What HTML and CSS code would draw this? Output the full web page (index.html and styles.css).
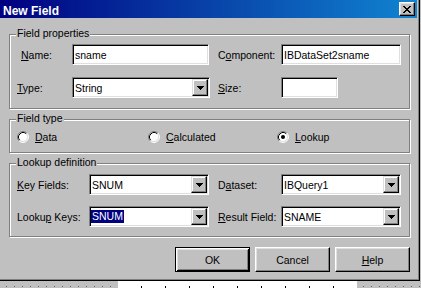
FILE: index.html
```html
<!DOCTYPE html>
<html lang="en">
  <head>
    <meta charset="UTF-8" />
    <title>New Field</title>
    <link rel="stylesheet" href="styles.css">
  </head>
  <body>
    <div class="dialog">
      <div class="titlebar">
        <span class="title">New Field</span>
        <span class="close">
          <svg width="8" height="7" viewBox="0 0 8 7" shape-rendering="crispEdges">
            <path d="M0 0h2v1h-2zM6 0h2v1h-2zM1 1h2v1h-2zM5 1h2v1h-2zM2 2h4v1h-4zM3 3h2v1h-2zM2 4h4v1h-4zM1 5h2v1h-2zM5 5h2v1h-2zM0 6h2v1h-2zM6 6h2v1h-2z" />
          </svg>
        </span>
      </div>

      <div class="client">
        <div class="group props">
          <span class="legend">Field properties</span>
          <div class="row">
            <span class="lbl lbl-name"><u>N</u>ame:</span>
            <div class="edit w-name"><span class="text">sname</span></div>
            <span class="lbl lbl-right">C<u>o</u>mponent:</span>
            <div class="edit w-wide"><span class="text">IBDataSet2sname</span></div>
          </div>
          <div class="row">
            <span class="lbl"><u>T</u>ype:</span>
            <div class="edit w-type">
              <span class="text">String</span>
              <span class="drop"><svg width="7" height="4" viewBox="0 0 7 4" shape-rendering="crispEdges"><path d="M0 0h7v1h-7zM1 1h5v1h-5zM2 2h3v1h-3zM3 3h1v1h-1z" /></svg></span>
            </div>
            <span class="lbl lbl-right lbl-size"><u>S</u>ize:</span>
            <div class="edit w-size"></div>
          </div>
        </div>

        <div class="group types">
          <span class="legend">Field type</span>
          <div class="radios">
            <div class="radio-item r-data">
              <svg class="radio" width="12" height="12" viewBox="0 0 12 12">
                <circle cx="6" cy="6" r="5" fill="#fff" />
                <path d="M2.11 9.89A5.5 5.5 0 0 1 9.89 2.11" stroke="#808080" fill="none" />
                <path d="M9.89 2.11A5.5 5.5 0 0 1 2.11 9.89" stroke="#fff" fill="none" />
                <path d="M2.82 9.18A4.5 4.5 0 0 1 9.18 2.82" stroke="#000" fill="none" />
                <path d="M9.18 2.82A4.5 4.5 0 0 1 2.82 9.18" stroke="#dfdfdf" fill="none" />
              </svg>
              <span><u>D</u>ata</span>
            </div>
            <div class="radio-item r-calc">
              <svg class="radio" width="12" height="12" viewBox="0 0 12 12">
                <circle cx="6" cy="6" r="5" fill="#fff" />
                <path d="M2.11 9.89A5.5 5.5 0 0 1 9.89 2.11" stroke="#808080" fill="none" />
                <path d="M9.89 2.11A5.5 5.5 0 0 1 2.11 9.89" stroke="#fff" fill="none" />
                <path d="M2.82 9.18A4.5 4.5 0 0 1 9.18 2.82" stroke="#000" fill="none" />
                <path d="M9.18 2.82A4.5 4.5 0 0 1 2.82 9.18" stroke="#dfdfdf" fill="none" />
              </svg>
              <span><u>C</u>alculated</span>
            </div>
            <div class="radio-item">
              <svg class="radio" width="12" height="12" viewBox="0 0 12 12">
                <circle cx="6" cy="6" r="5" fill="#fff" />
                <path d="M2.11 9.89A5.5 5.5 0 0 1 9.89 2.11" stroke="#808080" fill="none" />
                <path d="M9.89 2.11A5.5 5.5 0 0 1 2.11 9.89" stroke="#fff" fill="none" />
                <path d="M2.82 9.18A4.5 4.5 0 0 1 9.18 2.82" stroke="#000" fill="none" />
                <path d="M9.18 2.82A4.5 4.5 0 0 1 2.82 9.18" stroke="#dfdfdf" fill="none" />
                <circle cx="6" cy="6" r="2" fill="#000" />
              </svg>
              <span><u>L</u>ookup</span>
            </div>
          </div>
        </div>

        <div class="group lookup">
          <span class="legend">Lookup definition</span>
          <div class="row">
            <span class="lbl lbl-long"><u>K</u>ey Fields:</span>
            <div class="edit w-mid">
              <span class="text">SNUM</span>
              <span class="drop"><svg width="7" height="4" viewBox="0 0 7 4" shape-rendering="crispEdges"><path d="M0 0h7v1h-7zM1 1h5v1h-5zM2 2h3v1h-3zM3 3h1v1h-1z" /></svg></span>
            </div>
            <span class="lbl lbl-right">D<u>a</u>taset:</span>
            <div class="edit w-wide">
              <span class="text">IBQuery1</span>
              <span class="drop"><svg width="7" height="4" viewBox="0 0 7 4" shape-rendering="crispEdges"><path d="M0 0h7v1h-7zM1 1h5v1h-5zM2 2h3v1h-3zM3 3h1v1h-1z" /></svg></span>
            </div>
          </div>
          <div class="row">
            <span class="lbl lbl-long">Looku<u>p</u> Keys:</span>
            <div class="edit w-mid">
              <span class="text"><span class="sel">SNUM</span></span>
              <span class="drop"><svg width="7" height="4" viewBox="0 0 7 4" shape-rendering="crispEdges"><path d="M0 0h7v1h-7zM1 1h5v1h-5zM2 2h3v1h-3zM3 3h1v1h-1z" /></svg></span>
            </div>
            <span class="lbl lbl-right"><u>R</u>esult Field:</span>
            <div class="edit w-wide">
              <span class="text">SNAME</span>
              <span class="drop"><svg width="7" height="4" viewBox="0 0 7 4" shape-rendering="crispEdges"><path d="M0 0h7v1h-7zM1 1h5v1h-5zM2 2h3v1h-3zM3 3h1v1h-1z" /></svg></span>
            </div>
          </div>
        </div>

        <div class="buttons">
          <button class="btn default">OK</button>
          <button class="btn">Cancel</button>
          <button class="btn"><u>H</u>elp</button>
        </div>
      </div>
    </div>

    <div class="designer">
      <div class="dots dots-left"></div>
      <div class="sheet"></div>
      <div class="dots"></div>
    </div>
  </body>
</html>
```

FILE: styles.css
```css
body {
  margin: 0;
  width: 421px;
  height: 288px;
  overflow: hidden;
  background: #c0c0c0;
  font-family: "Liberation Sans", Arial, sans-serif;
  font-size: 10.5px;
  color: #000;
}
u {
  text-decoration: underline;
  text-underline-offset: 1px;
}
.dialog {
  width: 420px;
  height: 281px;
  box-sizing: border-box;
  border-right: 1px solid #000;
  border-bottom: 1px solid #000;
  box-shadow: inset -1px -1px #808080;
  padding: 0 2px 2px 0;
  background: #c0c0c0;
}
.titlebar {
  height: 18px;
  box-sizing: border-box;
  display: flex;
  justify-content: space-between;
  background: linear-gradient(90deg, #000080, #1084d0);
  padding: 0 2px 0 3px;
}
.title {
  color: #fff;
  font-weight: bold;
  font-size: 12px;
  line-height: 14px;
  padding-top: 4px;
}
.close {
  margin-top: 2px;
  width: 16px;
  height: 14px;
  box-sizing: border-box;
  display: flex;
  align-items: center;
  justify-content: center;
  padding-right: 1px;
  background: #c0c0c0;
  border: 1px solid;
  border-color: #fff #000 #000 #fff;
  box-shadow: inset -1px -1px #808080, inset 1px 1px #dfdfdf;
}
.client {
  display: flex;
  flex-direction: column;
  padding: 16px 0 0 9px;
}
.group {
  position: relative;
  box-sizing: border-box;
  width: 401px;
  border: 1px solid #808080;
  box-shadow: inset 1px 1px #fff, 1px 1px #fff;
}
.legend {
  position: absolute;
  left: 6px;
  top: -8px;
  padding: 0 1px;
  line-height: 13px;
  background: #c0c0c0;
}
.props {
  height: 75px;
  padding: 9px 0 0 7px;
}
.types {
  height: 34px;
  margin-top: 10px;
  padding: 10px 0 0 7px;
}
.lookup {
  height: 74px;
  margin-top: 10px;
  padding: 10px 0 0 7px;
}
.row {
  display: flex;
  align-items: center;
  height: 21px;
}
.props .row + .row {
  margin-top: 12px;
}
.lookup .row + .row {
  margin-top: 11px;
}
.lbl {
  width: 55px;
  flex: none;
  white-space: nowrap;
}
.lbl-name {
  width: 51px;
  padding-left: 4px;
}
.lbl-long {
  width: 72px;
}
.lbl-right {
  width: 63px;
  margin-left: 9px;
}
.lbl-size {
  margin-left: 8px;
}
.edit {
  box-sizing: border-box;
  height: 21px;
  flex: none;
  display: flex;
  align-items: center;
  padding: 1px;
  background: #fff;
  border: 1px solid;
  border-color: #808080 #fff #fff #808080;
  box-shadow: inset 1px 1px #000, inset -1px -1px #dfdfdf;
}
.w-name {
  width: 137px;
}
.w-type {
  width: 138px;
}
.w-wide {
  width: 120px;
}
.w-mid {
  width: 120px;
}
.w-size {
  width: 57px;
}
.text {
  flex: 1;
  padding-left: 1px;
  white-space: nowrap;
  overflow: hidden;
}
.sel {
  background: #000080;
  color: #fff;
  line-height: 13px;
  display: inline-block;
  margin-left: -1px;
  padding: 0 1px;
}
.drop {
  width: 16px;
  height: 17px;
  box-sizing: border-box;
  display: flex;
  align-items: center;
  justify-content: center;
  background: #c0c0c0;
  border: 1px solid;
  border-color: #dfdfdf #000 #000 #dfdfdf;
  box-shadow: inset -1px -1px #808080, inset 1px 1px #fff;
}
.radios {
  display: flex;
  align-items: center;
  height: 14px;
}
.radio-item {
  display: flex;
  align-items: center;
  gap: 6px;
}
.r-data {
  width: 131px;
}
.r-calc {
  width: 129px;
}
.buttons {
  display: flex;
  justify-content: flex-end;
  gap: 5px;
  margin-top: 10px;
  padding-right: 7px;
}
.btn {
  width: 75px;
  height: 25px;
  box-sizing: border-box;
  padding: 0;
  font: inherit;
  color: #000;
  background: #c0c0c0;
  border: 1px solid;
  border-color: #fff #000 #000 #fff;
  box-shadow: inset -1px -1px #808080, inset 1px 1px #dfdfdf;
}
.default {
  border-color: #000;
  box-shadow: inset 1px 1px #fff, inset -1px -1px #000, inset 2px 2px #dfdfdf, inset -2px -2px #808080;
}
.designer {
  display: flex;
  height: 7px;
}
.dots {
  flex: 1;
  background-image: repeating-linear-gradient(90deg, transparent 0 6px, #66664a 6px 7px, transparent 7px 8px);
  background-size: 100% 1px;
  background-repeat: no-repeat;
  background-position: 0 5px;
}
.dots-left {
  flex: none;
  width: 118px;
}
.sheet {
  width: 239px;
  background-color: #fff;
  background-image: repeating-linear-gradient(90deg, transparent 0 23px, #000 23px 24px);
  background-size: 100% 2px;
  background-repeat: no-repeat;
  background-position: 0 5px;
}
```
